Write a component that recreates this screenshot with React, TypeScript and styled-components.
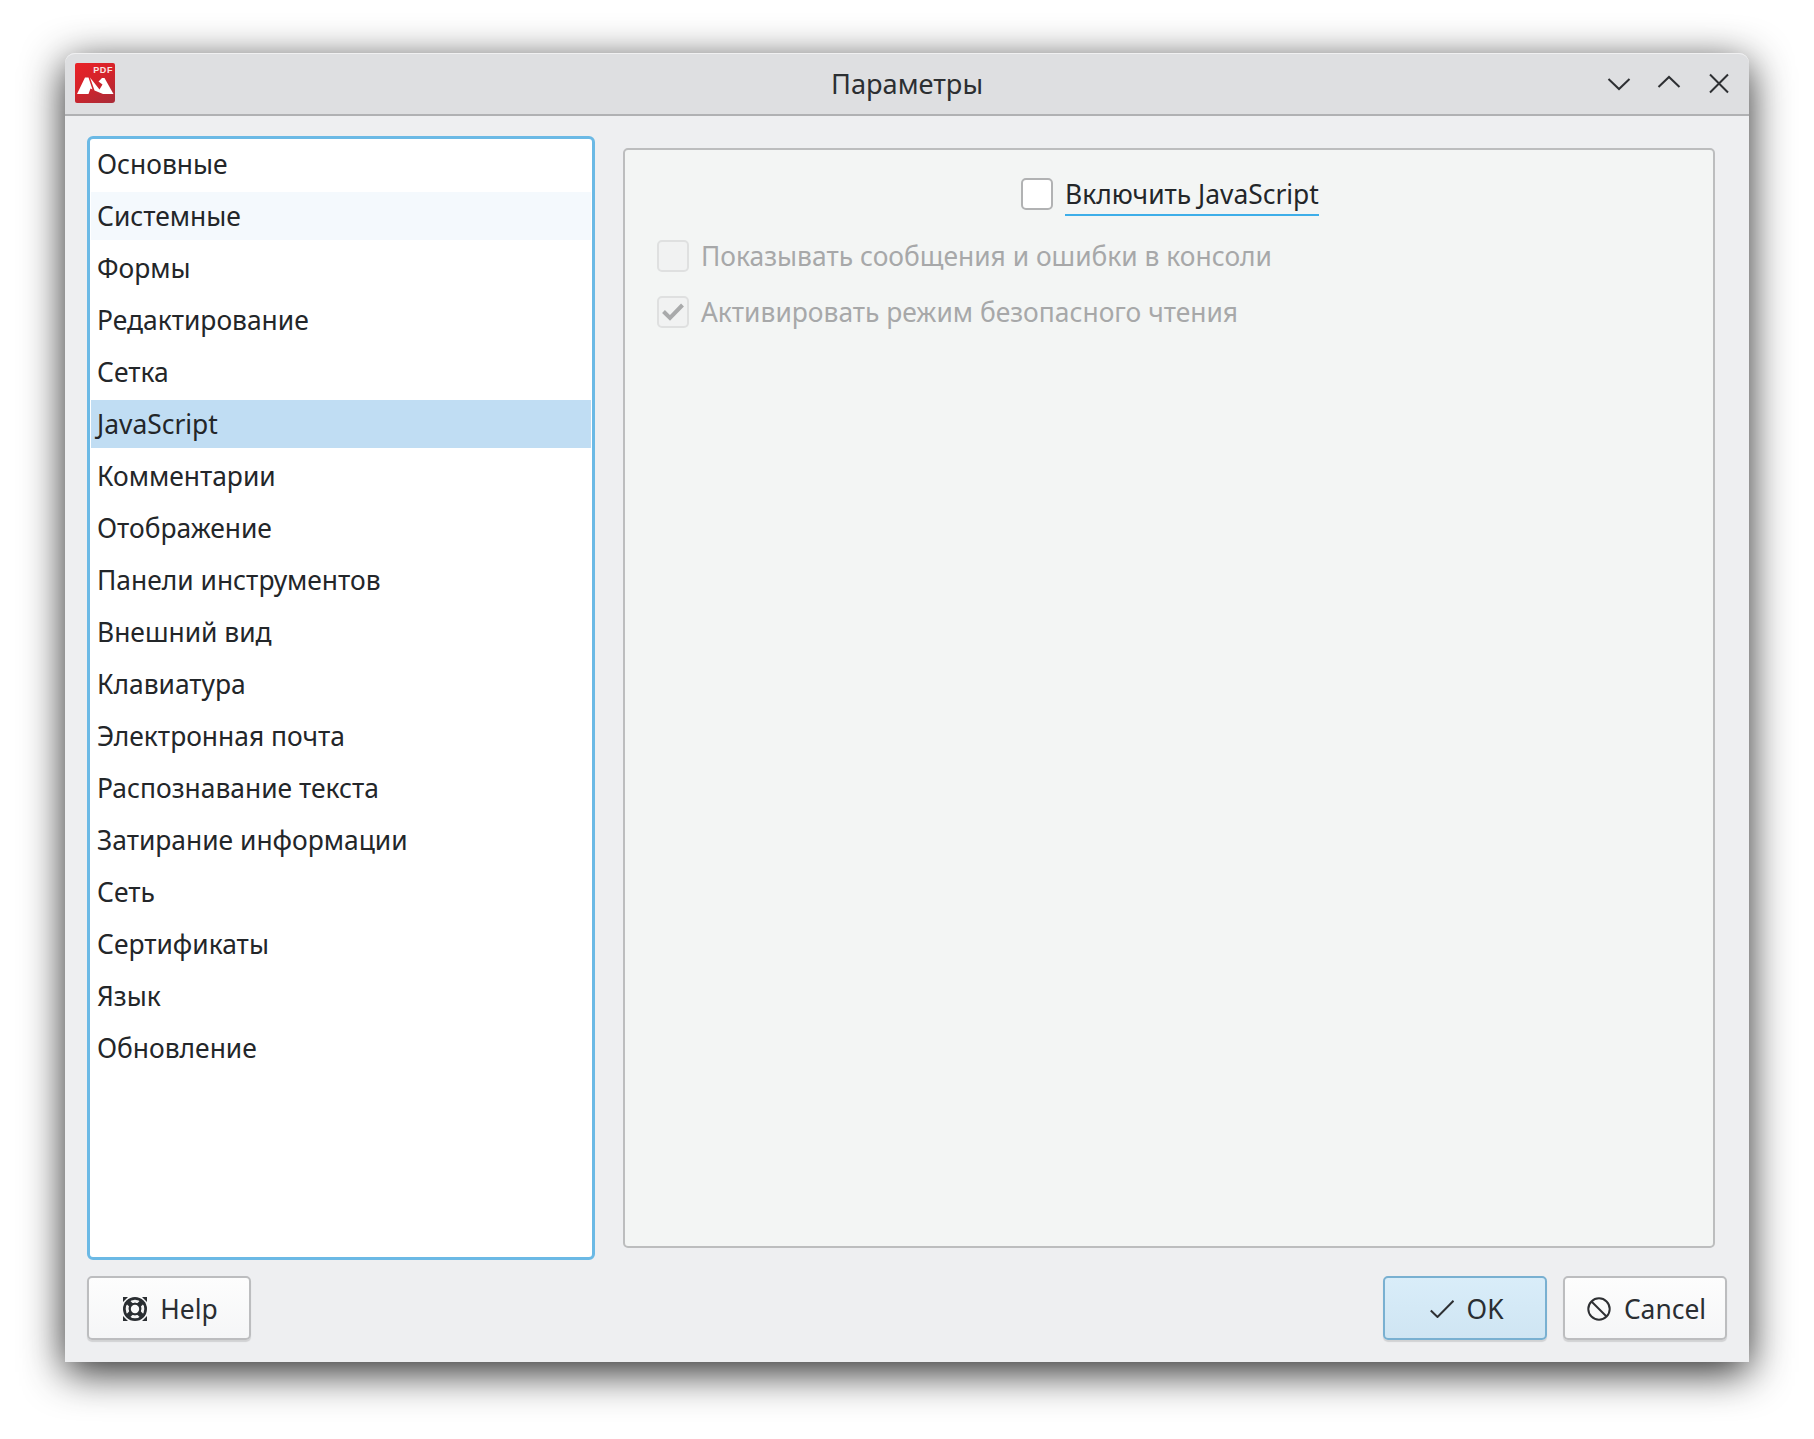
import React from 'react';
import styled, { createGlobalStyle } from 'styled-components';

const GlobalStyle = createGlobalStyle`
  html, body {
    margin: 0;
    padding: 0;
    background: #ffffff;
  }
  body {
    font-family: "Noto Sans", "Open Sans", sans-serif;
    color: #232629;
  }
`;

const categories = [
  'Основные',
  'Системные',
  'Формы',
  'Редактирование',
  'Сетка',
  'JavaScript',
  'Комментарии',
  'Отображение',
  'Панели инструментов',
  'Внешний вид',
  'Клавиатура',
  'Электронная почта',
  'Распознавание текста',
  'Затирание информации',
  'Сеть',
  'Сертификаты',
  'Язык',
  'Обновление',
];

const Logo = () => (
  <LogoBox>
    <LogoLabel>PDF</LogoLabel>
    <svg width="40" height="40" viewBox="0 0 40 40">
      <path fill="#fff" d="M2 31 L10 14.5 H13.5 L17.5 26.5 L15.5 25.5 L13.5 31 Z" />
      <path fill="#fff" d="M15 14.5 L24.5 26.5 L27.5 21.5 L23.5 18.5 L27 15 H29.5 L38.5 31 L28 31 L19.5 27.5 Z" />
    </svg>
  </LogoBox>
);

const ChevronDownIcon = () => (
  <svg width="24" height="24" viewBox="0 0 24 24" fill="none" stroke="#2e3033" strokeWidth="2">
    <path d="M1.5 7 L12 17 L22.5 7" />
  </svg>
);

const ChevronUpIcon = () => (
  <svg width="24" height="24" viewBox="0 0 24 24" fill="none" stroke="#2e3033" strokeWidth="2">
    <path d="M1.5 15 L12 5 L22.5 15" />
  </svg>
);

const CloseIcon = () => (
  <svg width="24" height="24" viewBox="0 0 24 24" fill="none" stroke="#2e3033" strokeWidth="2">
    <path d="M3 2.5 L21 20.5 M21 2.5 L3 20.5" />
  </svg>
);

const TickIcon = () => (
  <svg width="24" height="18" viewBox="0 0 24 18" fill="none" stroke="#a9aaab" strokeWidth="4">
    <path d="M2.5 8.5 L9 15 L21.5 2" />
  </svg>
);

const HelpIcon = () => (
  <svg width="24" height="24" viewBox="0 0 24 24">
    <path d="M0 0 H5 L0 5 Z M24 0 H19 L24 5 Z M0 24 H5 L0 19 Z M24 24 H19 L24 19 Z" fill="#2a2e32" />
    <circle cx="12" cy="12" r="12" fill="#2a2e32" />
    <circle cx="12" cy="12" r="7.8" fill="none" stroke="#f4f4f4" strokeWidth="3" />
    <path d="M4 4 L20 20 M20 4 L4 20" stroke="#2a2e32" strokeWidth="4.6" />
    <circle cx="12" cy="12" r="6.2" fill="#2a2e32" />
    <circle cx="12" cy="12" r="4.2" fill="#fafafa" />
  </svg>
);

const CheckIcon = () => (
  <svg width="24" height="18" viewBox="0 0 24 18" fill="none" stroke="#2e3033" strokeWidth="2">
    <path d="M0.8 10.5 L7.5 17 L23.5 0.8" />
  </svg>
);

const CancelIcon = () => (
  <svg width="24" height="24" viewBox="0 0 24 24" fill="none" stroke="#2e3033" strokeWidth="2">
    <circle cx="12" cy="12" r="10.7" />
    <path d="M4.5 4.5 L19.5 19.5" />
  </svg>
);

export default function App() {
  return (
    <>
      <GlobalStyle />
      <Page>
        <Dialog>
          <TitleBar>
            <Logo />
            <Title>Параметры</Title>
            <WindowControls>
              <WindowButton><ChevronDownIcon /></WindowButton>
              <WindowButton><ChevronUpIcon /></WindowButton>
              <WindowButton><CloseIcon /></WindowButton>
            </WindowControls>
          </TitleBar>
          <Content>
            <Columns>
              <CategoryList>
                {categories.map((name) => (
                  <CategoryItem
                    key={name}
                    $hovered={name === 'Системные'}
                    $selected={name === 'JavaScript'}
                  >
                    {name}
                  </CategoryItem>
                ))}
              </CategoryList>
              <SettingsPanel>
                <EnableRow>
                  <CheckBox />
                  <EnableLabel>Включить JavaScript</EnableLabel>
                </EnableRow>
                <OptionRow>
                  <CheckBox $disabled />
                  <OptionLabel>Показывать сообщения и ошибки в консоли</OptionLabel>
                </OptionRow>
                <OptionRow>
                  <CheckBox $disabled>
                    <TickIcon />
                  </CheckBox>
                  <OptionLabel>Активировать режим безопасного чтения</OptionLabel>
                </OptionRow>
              </SettingsPanel>
            </Columns>
            <Footer>
              <PushButton>
                <HelpIcon />
                Help
              </PushButton>
              <FooterRight>
                <PushButton $primary>
                  <CheckIcon />
                  OK
                </PushButton>
                <PushButton>
                  <CancelIcon />
                  Cancel
                </PushButton>
              </FooterRight>
            </Footer>
          </Content>
        </Dialog>
      </Page>
    </>
  );
}

const Page = styled.div`
  box-sizing: border-box;
  width: 1814px;
  height: 1439px;
  padding: 53px 65px 77px;
  overflow: hidden;
`;

const Dialog = styled.div`
  box-sizing: border-box;
  height: 100%;
  display: flex;
  flex-direction: column;
  background-color: #eeeff1;
  border-radius: 10px 10px 0 0;
  box-shadow: 0 10px 42px rgba(0, 0, 0, 0.85);
`;

const TitleBar = styled.div`
  box-sizing: border-box;
  flex: none;
  height: 63px;
  display: grid;
  grid-template-columns: 1fr auto 1fr;
  align-items: center;
  padding: 0 5px 2px 10px;
  background-color: #dedfe1;
  border-bottom: 2px solid #b0b1b3;
  border-top: 1px solid #f0f0f1;
  border-radius: 10px 10px 0 0;
`;

const LogoBox = styled.div`
  position: relative;
  width: 40px;
  height: 40px;
  border-radius: 2px 2px 3px 2px;
  background: linear-gradient(150deg, #e92227 0%, #d5232a 45%, #a82c38 100%);
  svg {
    display: block;
  }
`;

const LogoLabel = styled.span`
  position: absolute;
  top: 2px;
  right: 2px;
  font-family: "Liberation Sans", sans-serif;
  font-size: 9px;
  line-height: 11px;
  font-weight: 700;
  letter-spacing: 0.6px;
  color: #fbe3e3;
`;

const Title = styled.div`
  padding: 2px 5px 0 0;
  font-size: 27.2px;
  line-height: 36px;
  color: #2c2f32;
`;

const WindowControls = styled.div`
  display: flex;
  justify-content: flex-end;
  padding-top: 2px;
`;

const WindowButton = styled.div`
  width: 50px;
  height: 40px;
  display: flex;
  align-items: center;
  justify-content: center;
`;

const Content = styled.div`
  box-sizing: border-box;
  flex: 1;
  min-height: 0;
  display: flex;
  flex-direction: column;
  padding: 20px 22px 22px 22px;
`;

const Columns = styled.div`
  flex: 1;
  min-height: 0;
  display: grid;
  grid-template-columns: 508px 1fr;
  column-gap: 28px;
`;

const CategoryList = styled.div`
  box-sizing: border-box;
  display: flex;
  flex-direction: column;
  gap: 4px;
  padding: 1px 1px 0 1px;
  background-color: #ffffff;
  border: 3px solid #6bb9e5;
  border-radius: 6px;
`;

const CategoryItem = styled.div<{ $hovered?: boolean; $selected?: boolean }>`
  height: 48px;
  line-height: 49px;
  padding-left: 6px;
  font-size: 26.4px;
  color: #232629;
  background-color: ${(p) => (p.$selected ? '#c0ddf3' : p.$hovered ? '#f4f9fd' : 'transparent')};
`;

const SettingsPanel = styled.div`
  box-sizing: border-box;
  margin: 12px 12px 12px 0;
  padding: 28px 32px;
  display: flex;
  flex-direction: column;
  gap: 24px;
  background-color: #f3f5f4;
  border: 2px solid #bcbdbe;
  border-radius: 5px;
`;

const EnableRow = styled.div`
  align-self: center;
  display: flex;
  align-items: flex-start;
  gap: 12px;
  height: 38px;
  padding-left: 2px;
`;

const EnableLabel = styled.span`
  height: 36px;
  line-height: 33px;
  font-size: 26.4px;
  color: #232629;
  border-bottom: 2px solid #3daee9;
`;

const OptionRow = styled.div`
  display: flex;
  align-items: center;
  gap: 12px;
  height: 32px;
`;

const OptionLabel = styled.span`
  font-size: 26.4px;
  line-height: 32px;
  color: #a7a8a9;
`;

const CheckBox = styled.div<{ $disabled?: boolean }>`
  box-sizing: border-box;
  flex: none;
  width: 32px;
  height: 32px;
  display: flex;
  align-items: center;
  justify-content: center;
  border-radius: 5px;
  border: 2px solid ${(p) => (p.$disabled ? '#dfe0e0' : '#b1b2b3')};
  background-color: ${(p) => (p.$disabled ? '#f1f2f2' : '#ffffff')};
`;

const Footer = styled.div`
  flex: none;
  display: flex;
  justify-content: space-between;
  margin-top: 16px;
`;

const FooterRight = styled.div`
  display: flex;
  gap: 16px;
`;

const PushButton = styled.div<{ $primary?: boolean }>`
  box-sizing: border-box;
  width: 164px;
  height: 64px;
  padding: 1px 0 0 3px;
  display: flex;
  align-items: center;
  justify-content: center;
  gap: 13px;
  font-size: 26.4px;
  color: #2a2e32;
  border-radius: 5px;
  border: 2px solid ${(p) => (p.$primary ? '#79b0d1' : '#bcbdbf')};
  background: ${(p) =>
    p.$primary
      ? 'linear-gradient(180deg, #d9edf9 0%, #cfe5f3 100%)'
      : 'linear-gradient(180deg, #fdfdfd 0%, #f5f6f7 100%)'};
  box-shadow: 0 2px 1px rgba(0, 0, 0, 0.12);
`;
